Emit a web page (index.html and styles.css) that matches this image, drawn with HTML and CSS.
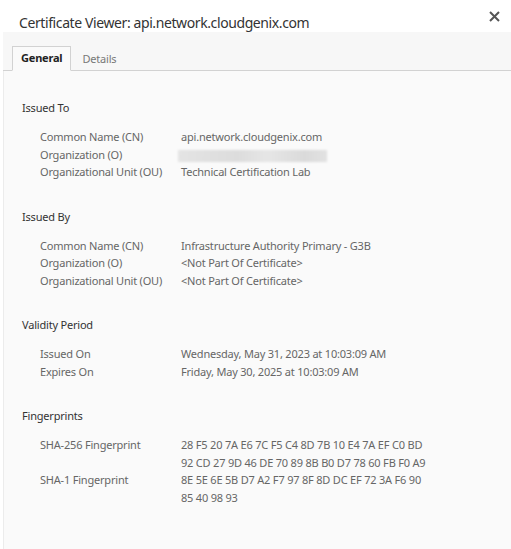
FILE: index.html
```html
<!DOCTYPE html>
<html>
<head>
<meta charset="utf-8">
<link rel="stylesheet" href="styles.css">
</head>
<body>
<div class="dialog">
  <div class="header">
    <div class="title">Certificate Viewer: api.network.cloudgenix.com</div>
    <div class="close">
      <svg width="11" height="11" viewBox="0 0 11 11"><path d="M1 1L10 10M10 1L1 10" stroke="#555" stroke-width="2"/></svg>
    </div>
  </div>
  <div class="tabs">
    <div class="tab active">General</div>
    <div class="tab">Details</div>
  </div>
  <div class="content">
    <div class="section">
      <div class="heading">Issued To</div>
      <div class="rows">
        <div class="label">Common Name (CN)</div><div class="value">api.network.cloudgenix.com</div>
        <div class="label">Organization (O)</div><div class="value"><span class="blur"></span></div>
        <div class="label">Organizational Unit (OU)</div><div class="value">Technical Certification Lab</div>
      </div>
    </div>
    <div class="section">
      <div class="heading">Issued By</div>
      <div class="rows">
        <div class="label">Common Name (CN)</div><div class="value">Infrastructure Authority Primary - G3B</div>
        <div class="label">Organization (O)</div><div class="value">&lt;Not Part Of Certificate&gt;</div>
        <div class="label">Organizational Unit (OU)</div><div class="value">&lt;Not Part Of Certificate&gt;</div>
      </div>
    </div>
    <div class="section">
      <div class="heading">Validity Period</div>
      <div class="rows">
        <div class="label">Issued On</div><div class="value">Wednesday, May 31, 2023 at 10:03:09 AM</div>
        <div class="label">Expires On</div><div class="value">Friday, May 30, 2025 at 10:03:09 AM</div>
      </div>
    </div>
    <div class="section">
      <div class="heading">Fingerprints</div>
      <div class="rows">
        <div class="label">SHA-256 Fingerprint</div><div class="value">28 F5 20 7A E6 7C F5 C4 8D 7B 10 E4 7A EF C0 BD<br>92 CD 27 9D 46 DE 70 89 8B B0 D7 78 60 FB F0 A9</div>
        <div class="label">SHA-1 Fingerprint</div><div class="value">8E 5E 6E 5B D7 A2 F7 97 8F 8D DC EF 72 3A F6 90<br>85 40 98 93</div>
      </div>
    </div>
  </div>
</div>
</body>
</html>
```

FILE: styles.css
```css
html, body {
  margin: 0;
  padding: 0;
  background: #ffffff;
}
body {
  font-family: "Noto Sans", "Open Sans", sans-serif;
  width: 511px;
  height: 549px;
  overflow: hidden;
}
.dialog {
  display: flex;
  flex-direction: column;
  height: 549px;
}
.header {
  height: 32px;
  display: flex;
  justify-content: space-between;
  background: #ffffff;
}
.title {
  padding: 13px 0 0 19px;
  font-size: 14px;
  color: #333;
  letter-spacing: -0.4px;
}
.close {
  padding: 5px 11px 0 0;
}
.tabs {
  background: #f7f7f7;
  border-bottom: 1px solid #d2d2d2;
  display: flex;
  align-items: flex-end;
  padding-left: 9px;
  box-sizing: border-box;
  height: 39px;
  margin-left: 3px;
}
.tab {
  font-size: 11px;
  color: #777;
  padding: 0 11px;
  height: 24px;
  line-height: 24px;
  box-sizing: border-box;
  margin-bottom: -1px;
  letter-spacing: -0.2px;
}
.tab.active {
  color: #222;
  font-weight: bold;
  background: #fafafa;
  border: 1px solid #d2d2d2;
  border-bottom: 1px solid #fafafa;
  padding: 0 8px;
  line-height: 22px;
  height: 25px;
}
.content {
  flex: 1;
  background: #fafafa;
  margin-left: 3px;
  border-left: 1px solid #ececec;
  padding: 28px 0 0 18px;
}
.section {
  margin-bottom: 27px;
}
.heading {
  font-size: 11px;
  color: #333;
  line-height: 18px;
  margin-bottom: 11px;
  letter-spacing: -0.2px;
}
.rows {
  display: grid;
  grid-template-columns: 141px 1fr;
  padding-left: 18px;
  font-size: 11px;
  line-height: 17.5px;
  color: #666;
  letter-spacing: -0.2px;
}
.value {
  color: #666;
}
.blur {
  display: inline-block;
  width: 149px;
  height: 12px;
  vertical-align: middle;
  margin-left: -3px;
  background: linear-gradient(90deg, #e4e4e4, #dcdcdc 40%, #e6e6e6 60%, #dadada 85%, #e2e2e2);
  filter: blur(1px);
}
```
